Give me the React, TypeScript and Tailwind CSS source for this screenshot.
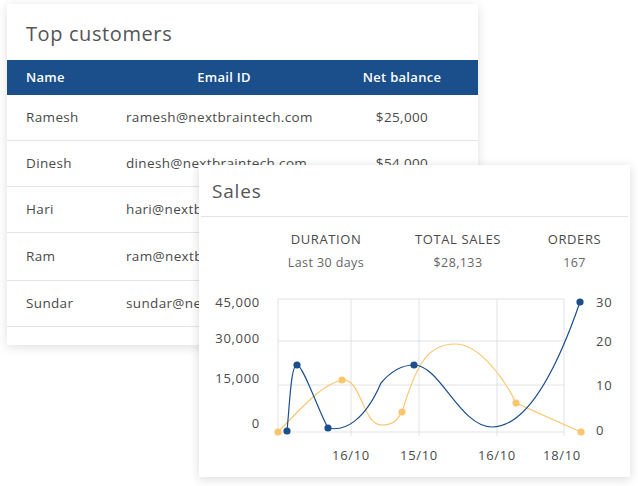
import React from 'react';

const customers = [
  { name: 'Ramesh', email: 'ramesh@nextbraintech.com', balance: '$25,000' },
  { name: 'Dinesh', email: 'dinesh@nextbraintech.com', balance: '$54,000' },
  { name: 'Hari', email: 'hari@nextbraintech.com', balance: '$12,000' },
  { name: 'Ram', email: 'ram@nextbraintech.com', balance: '$31,000' },
  { name: 'Sundar', email: 'sundar@nextbraintech.com', balance: '$18,000' },
];

const stats = [
  { label: 'DURATION', value: 'Last 30 days', w: 'w-[128px]' },
  { label: 'TOTAL SALES', value: '$28,133', w: 'w-[136px]' },
  { label: 'ORDERS', value: '167', w: 'w-[97px]' },
];

// chart drawn in page coordinates, shifted into the svg box
const SalesChart = () => {
  const gridY = [299, 341, 385, 432];
  const gridX = [278, 351, 419, 497, 564];
  const blueDots = [[287, 431], [297, 365], [328, 428], [414, 365], [580, 302]];
  const orangeDots = [[278, 432], [342, 380], [402, 412], [516, 403], [581, 432]];
  return (
    <svg width="431" height="190" className="block">
      <g transform="translate(-199,-285)">
        {gridY.map(y => (
          <line key={y} x1={278} x2={564} y1={y} y2={y} stroke="#dfe2e6" strokeWidth="1" />
        ))}
        {gridX.map(x => (
          <line key={x} x1={x} x2={x} y1={299} y2={436} stroke="#dfe2e6" strokeWidth="1" />
        ))}
        <g fill="#4a4a4a" fontSize="13" letterSpacing="0.7" fontFamily="'Open Sans', sans-serif">
          <text x="260" y="307" textAnchor="end">45,000</text>
          <text x="260" y="343" textAnchor="end">30,000</text>
          <text x="260" y="383" textAnchor="end">15,000</text>
          <text x="260" y="428" textAnchor="end">0</text>
          <text x="596" y="307">30</text>
          <text x="596" y="346">20</text>
          <text x="596" y="390">10</text>
          <text x="596" y="435">0</text>
          <text x="351" y="460" textAnchor="middle">16/10</text>
          <text x="419" y="460" textAnchor="middle">15/10</text>
          <text x="497" y="460" textAnchor="middle">16/10</text>
          <text x="562" y="460" textAnchor="middle">18/10</text>
        </g>
        <path
          d="M278 432 C300 410, 320 385, 342 380 C362 378, 362 425, 382 425 C395 425, 398 418, 402 412 C415 370, 425 344, 455 344 C480 344, 505 380, 516 403 L581 432"
          fill="none"
          stroke="#f9c66e"
          strokeWidth="1.2"
        />
        <path
          d="M287 431 C290 400, 291 365, 297 365 C303 365, 318 410, 328 428 C345 432, 365 420, 381 383 C392 370, 402 365, 414 365 C440 365, 460 427, 492 427 C530 427, 560 360, 580 302"
          fill="none"
          stroke="#1b4f8c"
          strokeWidth="1.2"
        />
        {orangeDots.map(([x, y], i) => (
          <circle key={i} cx={x} cy={y} r="3.6" fill="#f9c66e" />
        ))}
        {blueDots.map(([x, y], i) => (
          <circle key={i} cx={x} cy={y} r="3.6" fill="#1b4f8c" />
        ))}
      </g>
    </svg>
  );
};

export default function App() {
  return (
    <div className="relative w-[638px] h-[486px] bg-white overflow-hidden text-[#4a4a4a]" style={{ fontFamily: "'Open Sans', sans-serif" }}>
      {/* Top customers card */}
      <div className="absolute left-[7px] top-[4px] w-[471px] h-[341px] bg-white shadow-[0_2px_10px_rgba(0,0,0,0.13)]">
        <div className="h-[56px] pl-[19px] pt-[15px] text-[20px] tracking-[0.6px] text-[#555]">Top customers</div>
        <div className="flex items-center h-[35px] bg-[#1b4f8c] text-white text-[13px] font-semibold tracking-[0.3px]">
          <div className="w-[95px] pl-[19px]">Name</div>
          <div className="w-[244px] text-center">Email ID</div>
          <div className="w-[112px] text-center">Net balance</div>
        </div>
        {customers.map((c, i) => (
          <div
            key={c.name}
            className={`flex items-center border-b border-[#e4e4e4] text-[13.5px] tracking-[0.35px] ${i === 3 ? 'h-[48px]' : 'h-[46px]'}`}
          >
            <div className="w-[95px] pl-[19px]">{c.name}</div>
            <div className="w-[244px] pl-[24px]">{c.email}</div>
            <div className="w-[112px] text-center">{c.balance}</div>
          </div>
        ))}
      </div>

      {/* Sales card */}
      <div className="absolute left-[199px] top-[165px] w-[431px] h-[312px] bg-white shadow-[0_2px_10px_rgba(0,0,0,0.15)]">
        <div className="h-[52px] mx-[2px] pl-[11px] pt-[12px] text-[19px] tracking-[0.8px] text-[#555] border-b border-[#e4e4e4]">Sales</div>
        <div className="flex pt-[13px] h-[68px] text-[13px]">
          <div className="w-[63px] shrink-0" />
          {stats.map(s => (
            <div key={s.label} className={`flex flex-col items-center shrink-0 ${s.w}`}>
              <div className="tracking-[0.6px] text-[#4a4a4a]">{s.label}</div>
              <div className="mt-[4px] text-[12.5px] tracking-[0.4px] text-[#666]">{s.value}</div>
            </div>
          ))}
        </div>
        <SalesChart />
      </div>
    </div>
  );
}
